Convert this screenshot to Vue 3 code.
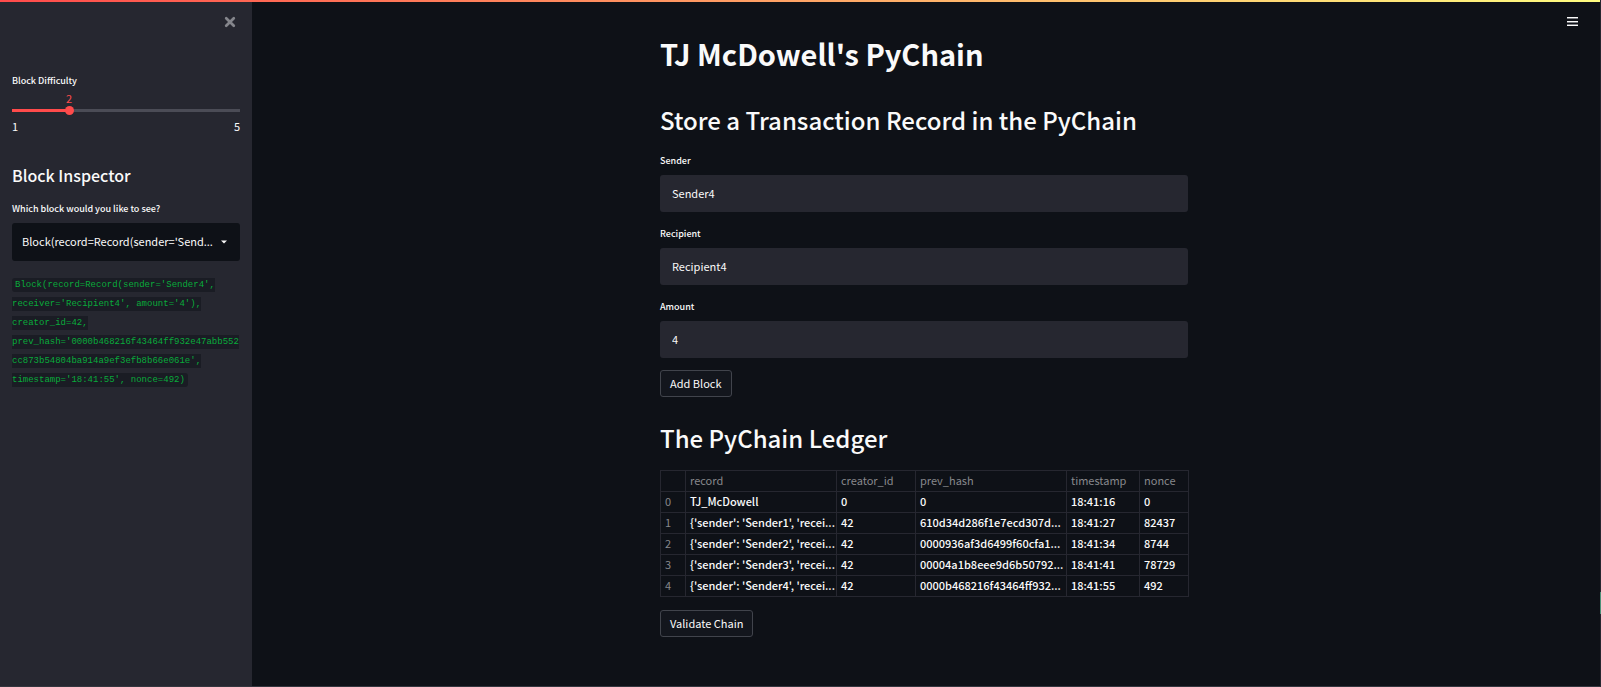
<script setup>
import { ref, computed } from 'vue'

const difficulty = ref(2)
const fill = computed(() => `${((difficulty.value - 1) / 4) * 100}%`)

const fields = ref([
  { id: 'sender', label: 'Sender', value: 'Sender4' },
  { id: 'recipient', label: 'Recipient', value: 'Recipient4' },
  { id: 'amount', label: 'Amount', value: '4' },
])

const block =
  "Block(record=Record(sender='Sender4', receiver='Recipient4', amount='4'), creator_id=42, prev_hash='0000b468216f43464ff932e47abb552cc873b54804ba914a9ef3efb8b66e061e', timestamp='18:41:55', nonce=492)"
const shortBlock = `${block.slice(0, 32)}...`

const columns = ['record', 'creator_id', 'prev_hash', 'timestamp', 'nonce']
const rows = [
  ['TJ_McDowell', '0', '0', '18:41:16', '0'],
  ["{'sender': 'Sender1', 'recei...", '42', '610d34d286f1e7ecd307d...', '18:41:27', '82437'],
  ["{'sender': 'Sender2', 'recei...", '42', '0000936af3d6499f60cfa1...', '18:41:34', '8744'],
  ["{'sender': 'Sender3', 'recei...", '42', '00004a1b8eee9d6b50792...', '18:41:41', '78729'],
  ["{'sender': 'Sender4', 'recei...", '42', '0000b468216f43464ff932...', '18:41:55', '492'],
]
</script>

<template>
  <div class="app">
    <aside class="sidebar">
      <button class="icon-button close" aria-label="Close sidebar">
        <svg width="12" height="12" viewBox="0 0 12 12"><path d="M2.2 2.2 9.8 9.8M9.8 2.2 2.2 9.8" stroke="#85868c" stroke-width="2.7" stroke-linecap="round" /></svg>
      </button>

      <label class="label" for="difficulty">Block Difficulty</label>
      <div class="slider">
        <div class="value-row"><output class="value" for="difficulty" :style="{ left: fill }">{{ difficulty }}</output></div>
        <div class="rail" :style="{ '--fill': fill }">
          <input id="difficulty" v-model.number="difficulty" type="range" min="1" max="5" />
        </div>
        <div class="limits"><span>1</span><span>5</span></div>
      </div>

      <h2 class="side-title">Block Inspector</h2>
      <label class="label" for="block">Which block would you like to see?</label>
      <div class="select-box">
        <select id="block"><option>{{ shortBlock }}</option></select>
        <svg class="caret" width="6" height="4" viewBox="0 0 6 4"><path d="M0 0.5h6L3 3.5z" fill="#fafafa" /></svg>
      </div>
      <p class="dump"><code>{{ block }}</code></p>
    </aside>

    <main class="main">
      <button class="icon-button menu" aria-label="Menu">
        <svg width="11" height="9" viewBox="0 0 11 9" shape-rendering="crispEdges"><path d="M0 0h11v1H0zM0 4h11v1H0zM0 8h11v1H0z" fill="#fafafa" /><path d="M0 1h11v1H0zM0 5h11v1H0zM0 7h11v1H0z" fill="#77797e" /></svg>
      </button>
      <div class="content">
        <h1>TJ McDowell's PyChain</h1>
        <h2>Store a Transaction Record in the PyChain</h2>
        <div v-for="field in fields" :key="field.id" class="field">
          <label class="label" :for="field.id">{{ field.label }}</label>
          <input :id="field.id" v-model="field.value" type="text" />
        </div>
        <button class="action">Add Block</button>
        <h2 class="ledger-title">The PyChain Ledger</h2>
        <table>
          <colgroup><col class="c-index" /><col class="c-wide" /><col class="c-id" /><col class="c-wide" /><col class="c-time" /><col class="c-nonce" /></colgroup>
          <thead>
            <tr><th></th><th v-for="c in columns" :key="c" scope="col">{{ c }}</th></tr>
          </thead>
          <tbody>
            <tr v-for="(row, i) in rows" :key="i">
              <th scope="row">{{ i }}</th>
              <td v-for="(cell, j) in row" :key="j">{{ cell }}</td>
            </tr>
          </tbody>
        </table>
        <button class="action">Validate Chain</button>
      </div>
    </main>
    <div class="edge"></div>
  </div>
</template>

<style>
body {
  background: #0e1117;
}
</style>

<style scoped>
.app {
  --sans: 'Noto Sans CJK SC', 'Open Sans', sans-serif;
  position: relative;
  display: flex;
  box-sizing: border-box;
  min-height: 100vh;
  border-right: 1px solid #262730;
  border-bottom: 1px solid #34363f;
  background: #0e1117;
  color: #fafafa;
  font-family: var(--sans);
  font-size: 11px;
  line-height: 18px;
}
.app::before {
  content: '';
  position: absolute;
  top: 0;
  left: 0;
  right: 0;
  height: 2px;
  background: linear-gradient(90deg, #ff4b4b, #fffd80);
}
.edge {
  position: absolute;
  right: -1px;
  top: 592px;
  width: 1px;
  height: 22px;
  background: #4d9078;
}
h1, h2, p {
  margin: 0;
}
button, input, select {
  font-family: inherit;
  font-size: inherit;
  color: inherit;
}
.icon-button {
  display: flex;
  padding: 0;
  border: 0;
  background: none;
}
.sidebar {
  box-sizing: border-box;
  width: 252px;
  flex: none;
  padding: 16px 12px 0;
  background: #262730;
}
.close {
  margin: 0 4px 43px auto;
}
.label {
  display: block;
  font-size: 9px;
  font-weight: 500;
  line-height: 20px;
}
.value-row {
  position: relative;
  height: 14px;
}
.value {
  position: absolute;
  transform: translateX(-50%);
  line-height: 14px;
  color: #ff4b4b;
}
.rail {
  display: flex;
  height: 10px;
  border-radius: 2px;
  background:
    linear-gradient(#ff4b4b, #ff4b4b) left center / var(--fill) 3px no-repeat,
    linear-gradient(#4b4c56, #4b4c56) center / 100% 3px no-repeat;
}
.rail input {
  flex: 1;
  height: 10px;
  margin: 0 -4px;
  appearance: none;
  background: none;
}
.rail input::-webkit-slider-thumb {
  appearance: none;
  width: 9px;
  height: 9px;
  border-radius: 50%;
  background: #ff4b4b;
}
.limits {
  display: flex;
  justify-content: space-between;
  margin-top: 2px;
}
.side-title {
  margin: 29px 0 13px;
  font-size: 16px;
  font-weight: 500;
  line-height: 22px;
}
.select-box {
  position: relative;
  display: flex;
  margin-top: 4px;
}
select {
  width: 100%;
  height: 38px;
  padding: 0 22px 2px 10px;
  border: 0;
  border-radius: 3px;
  appearance: none;
  background: #0e1117;
}
.caret {
  position: absolute;
  right: 13px;
  top: 17px;
}
.dump {
  margin-top: 15px;
  font-family: 'Liberation Mono', monospace;
  font-size: 9px;
  line-height: 19px;
}
code {
  padding: 2px 3px;
  border-radius: 3px;
  background: #1a1c24;
  color: #09ab3b;
  font: inherit;
  overflow-wrap: break-word;
}
.main {
  position: relative;
  flex: 1;
  padding: 33px 4px 48px 0;
}
.menu {
  position: absolute;
  top: 17px;
  right: 22px;
}
.content {
  max-width: 528px;
  margin: 0 auto;
}
h1 {
  font-size: 29px;
  font-weight: 700;
  line-height: 40px;
}
.content h2 {
  margin: 30px 0 14px;
  font-size: 24px;
  font-weight: 500;
  line-height: 34px;
}
.content .ledger-title {
  margin: 24px 0 15px;
}
.field {
  margin-bottom: 12px;
}
.field input {
  display: block;
  box-sizing: border-box;
  width: 100%;
  height: 37px;
  margin-top: 4px;
  padding: 0 12px 2px;
  border: 0;
  border-radius: 3px;
  background: #262730;
}
.action {
  display: block;
  height: 27px;
  padding: 0 9px 2px;
  border: 1px solid #41444c;
  border-radius: 3px;
  background: #13161d;
}
table {
  width: 100%;
  margin-bottom: 13px;
  border-collapse: collapse;
  table-layout: fixed;
}
.c-index { width: 25px; }
.c-wide { width: 151px; }
.c-id { width: 79px; }
.c-time { width: 73px; }
.c-nonce { width: 49px; }
th, td {
  height: 19px;
  padding: 0 4px 1px;
  border: 1px solid #262730;
  text-align: left;
  font-weight: 500;
  line-height: 19px;
  white-space: nowrap;
}
th {
  color: #87888c;
  font-weight: 400;
}
</style>
